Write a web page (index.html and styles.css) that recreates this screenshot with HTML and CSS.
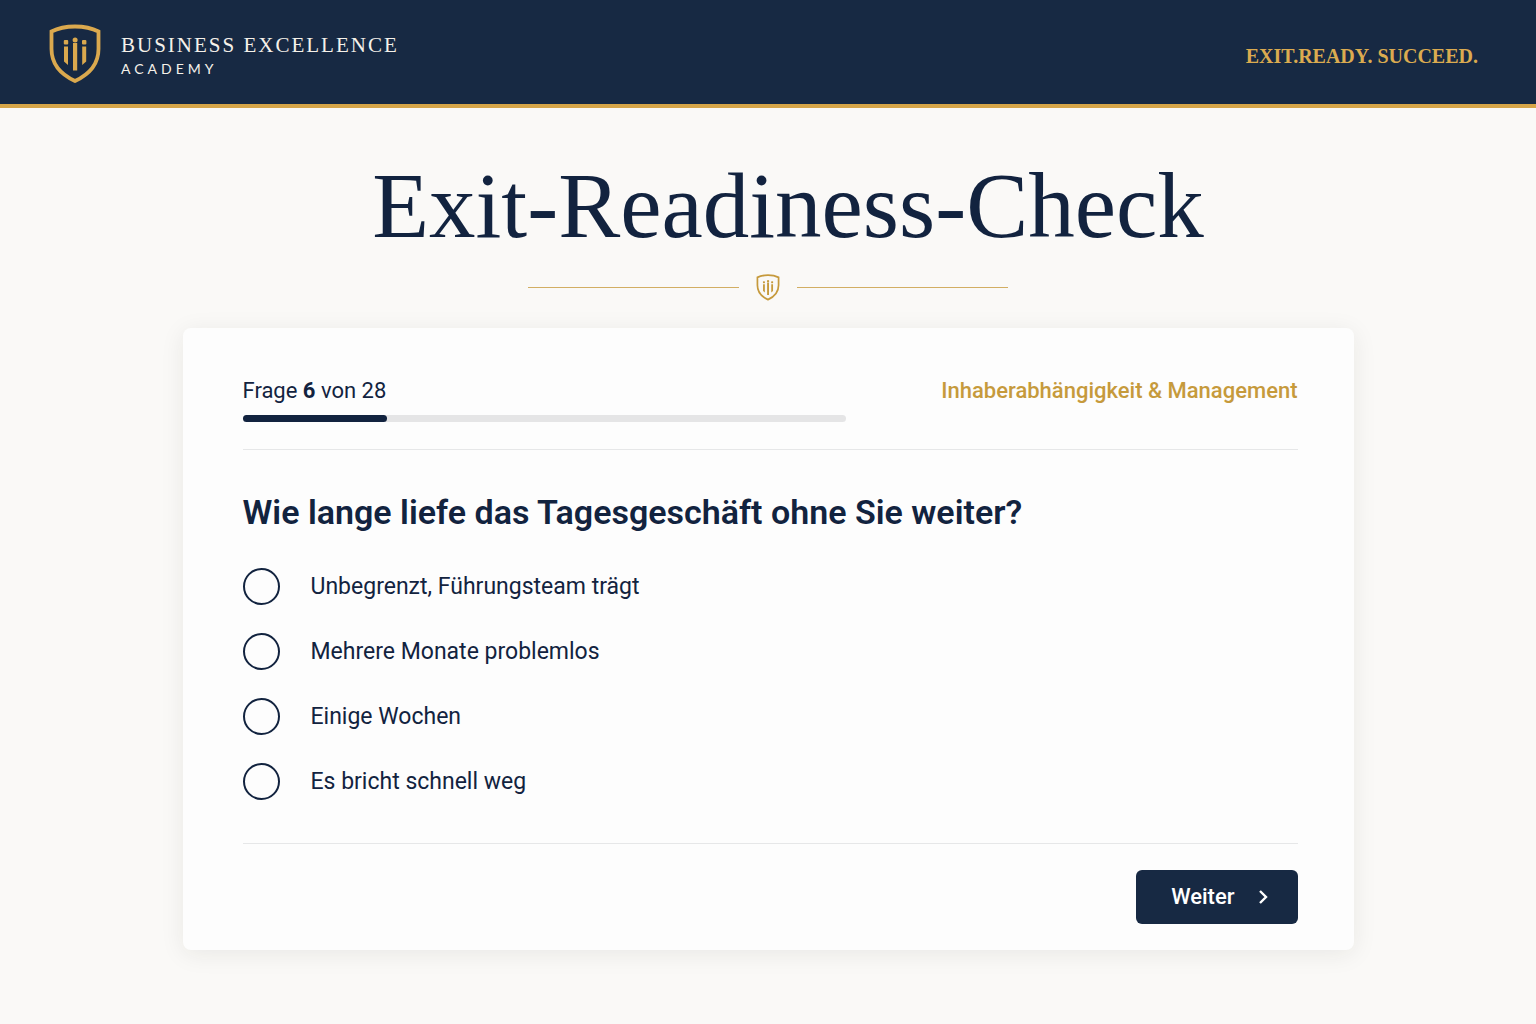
FILE: index.html
```html
<!DOCTYPE html>
<html lang="de">
<head>
<meta charset="utf-8">
<meta name="viewport" content="width=device-width, initial-scale=1">
<title>Exit-Readiness-Check</title>
<link rel="stylesheet" href="styles.css">
</head>
<body>
<svg class="sprite" aria-hidden="true">
  <symbol id="shield" viewBox="0 0 52 60">
    <path d="M26 2.500C18 2.500 9 4.200 2.500 7.500V25C2.500 41 12 50.500 26 57C40 50.500 49.500 41 49.500 25V7.500C43 4.200 34 2.500 26 2.500Z" fill="none" stroke="currentColor" stroke-width="3.800"/>
    <path d="M15 22.500H19V41L15 37.500ZM24 19H28.200V46.500H24ZM33.200 22.500H37.200V37.500L33.200 41Z" fill="currentColor"/>
    <rect x="14.800" y="16" width="4.400" height="4.400" rx="1" fill="currentColor"/>
    <rect x="33" y="16" width="4.400" height="4.400" rx="1" fill="currentColor"/>
    <circle cx="26.100" cy="16" r="2.500" fill="currentColor"/>
  </symbol>
</svg>

<header class="site-header">
  <a class="brand" href="#">
    <svg class="brand-shield" aria-hidden="true"><use href="#shield"/></svg>
    <span class="brand-text">
      <span class="brand-name">BUSINESS EXCELLENCE</span>
      <span class="brand-sub">ACADEMY</span>
    </span>
  </a>
  <p class="tagline">EXIT.READY. SUCCEED.</p>
</header>

<main class="page">
  <h1 class="title">Exit-Readiness-Check</h1>
  <div class="ornament" aria-hidden="true">
    <svg class="ornament-shield"><use href="#shield"/></svg>
  </div>

  <form class="card">
    <div class="status">
      <div class="progress-group">
        <p class="step" id="step">Frage <strong>6</strong> von 28</p>
        <div class="progress" role="progressbar" aria-labelledby="step" aria-valuemin="0" aria-valuemax="28" aria-valuenow="6">
          <div class="progress-fill" style="width: 24%"></div>
        </div>
      </div>
      <p class="category">Inhaberabhängigkeit &amp; Management</p>
    </div>

    <fieldset class="question">
      <legend class="question-title">Wie lange liefe das Tagesgeschäft ohne Sie weiter?</legend>
      <label class="option"><input class="radio" type="radio" name="answer" value="1">Unbegrenzt, Führungsteam trägt</label>
      <label class="option"><input class="radio" type="radio" name="answer" value="2">Mehrere Monate problemlos</label>
      <label class="option"><input class="radio" type="radio" name="answer" value="3">Einige Wochen</label>
      <label class="option"><input class="radio" type="radio" name="answer" value="4">Es bricht schnell weg</label>
    </fieldset>

    <div class="actions">
      <button class="next" type="button">Weiter
        <svg class="chevron" viewBox="0 0 10 16" aria-hidden="true"><path d="M2 2L8 8L2 14" fill="none" stroke="currentColor" stroke-width="2.400"/></svg>
      </button>
    </div>
  </form>
</main>
</body>
</html>
```
FILE: styles.css
```css
:root {
  --navy: #172943;
  --ink: #12233f;
  --gold: #d6a548;
  --gold-dark: #c69a3c;
  --line: #e6e7e8;
}

* {
  box-sizing: border-box;
}

body {
  margin: 0;
  min-height: 100vh;
  background: #faf9f7;
  color: var(--ink);
  font-family: Roboto, "Liberation Sans", sans-serif;
}

p,
h1 {
  margin: 0;
}

.sprite {
  display: none;
}

.site-header {
  display: flex;
  align-items: center;
  justify-content: space-between;
  min-height: 108px;
  padding: 0 58px 0 49px;
  background: var(--navy);
  border-bottom: 4px solid var(--gold);
}

.brand {
  display: flex;
  align-items: center;
  gap: 20px;
  padding-top: 3px;
  color: #f5f1ea;
  text-decoration: none;
}

.brand-shield {
  width: 52px;
  height: 60px;
  color: #dba94e;
}

.brand-text {
  display: flex;
  flex-direction: column;
  gap: 2px;
  padding-top: 4px;
}

.brand-name {
  font-family: "Liberation Serif", serif;
  font-size: 21px;
  line-height: 24px;
  letter-spacing: 2px;
}

.brand-sub {
  font-family: Lato, sans-serif;
  font-size: 14px;
  line-height: 20px;
  letter-spacing: 4px;
}

.tagline {
  padding-top: 8px;
  color: #dbab50;
  font-family: "Liberation Serif", serif;
  font-size: 20px;
  line-height: 24px;
  font-weight: 700;
}

.page {
  padding: 46px 24px 75px;
}

.title {
  padding-left: 40px;
  font-family: "Liberation Serif", serif;
  font-size: 93px;
  line-height: 104px;
  font-weight: 400;
  text-align: center;
}

.ornament {
  display: flex;
  align-items: center;
  gap: 17px;
  max-width: 480px;
  margin: 16px auto 27px;
  color: var(--gold-dark);
}

.ornament::before,
.ornament::after {
  content: "";
  flex: 1;
  border-top: 1px solid #d2ae63;
}

.ornament-shield {
  width: 24px;
  height: 27px;
}

.card {
  max-width: 1171px;
  margin: 0 auto;
  padding: 48px 56px 26px 60px;
  background: #fdfdfd;
  border-radius: 8px;
  box-shadow: 0 4px 24px rgba(40, 40, 30, 0.08);
}

.status {
  display: flex;
  align-items: flex-start;
  justify-content: space-between;
  gap: 40px;
  padding-bottom: 27px;
  border-bottom: 1px solid var(--line);
}

.progress-group {
  flex: 0 1 603px;
}

.step,
.category {
  font-size: 22px;
  line-height: 30px;
}

.step strong {
  font-weight: 700;
}

.category {
  color: var(--gold-dark);
  font-weight: 500;
}

.progress {
  height: 7px;
  margin-top: 9px;
  border-radius: 4px;
  background: #e5e5e6;
}

.progress-fill {
  height: 100%;
  border-radius: 4px;
  background: var(--ink);
}

.question {
  margin: 0;
  padding: 40px 0 29px;
  border: 0;
  border-bottom: 1px solid var(--line);
}

.question-title {
  float: left;
  width: 100%;
  margin-bottom: 20px;
  padding: 0;
  font-size: 34px;
  line-height: 44px;
  font-weight: 600;
}

.option {
  clear: both;
  display: flex;
  align-items: center;
  gap: 31px;
  min-height: 65px;
  font-size: 23px;
  line-height: 32px;
  cursor: pointer;
}

.radio {
  appearance: none;
  flex: none;
  width: 37px;
  height: 37px;
  margin: 0;
  border: 2px solid var(--ink);
  border-radius: 50%;
}

.radio:checked {
  background: radial-gradient(var(--ink) 45%, transparent 50%);
}

.actions {
  display: flex;
  justify-content: flex-end;
  padding-top: 26px;
}

.next {
  display: flex;
  align-items: center;
  gap: 23px;
  min-height: 54px;
  padding: 0 30px 0 35px;
  border: 0;
  border-radius: 6px;
  background: var(--navy);
  color: #fff;
  font: 500 22px/28px Roboto, "Liberation Sans", sans-serif;
  cursor: pointer;
}

.chevron {
  width: 10px;
  height: 16px;
}
```
